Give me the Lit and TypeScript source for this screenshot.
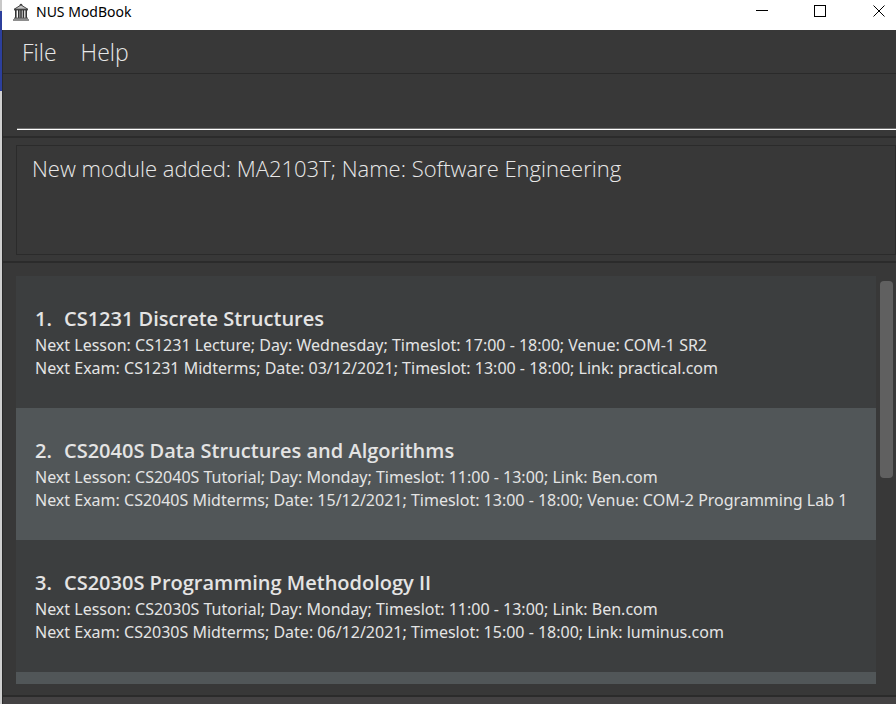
import { LitElement, html, css, svg } from "lit";
import { customElement, property } from "lit/decorators.js";

interface Module {
  title: string;
  lesson: string;
  exam: string;
}

const MODULES: Module[] = [
  {
    title: "CS1231 Discrete Structures",
    lesson: "CS1231 Lecture; Day: Wednesday; Timeslot: 17:00 - 18:00; Venue: COM-1 SR2",
    exam: "CS1231 Midterms; Date: 03/12/2021; Timeslot: 13:00 - 18:00; Link: practical.com",
  },
  {
    title: "CS2040S Data Structures and Algorithms",
    lesson: "CS2040S Tutorial; Day: Monday; Timeslot: 11:00 - 13:00; Link: Ben.com",
    exam: "CS2040S Midterms; Date: 15/12/2021; Timeslot: 13:00 - 18:00; Venue: COM-2 Programming Lab 1",
  },
  {
    title: "CS2030S Programming Methodology II",
    lesson: "CS2030S Tutorial; Day: Monday; Timeslot: 11:00 - 13:00; Link: Ben.com",
    exam: "CS2030S Midterms; Date: 06/12/2021; Timeslot: 15:00 - 18:00; Link: luminus.com",
  },
];

@customElement("title-bar")
export class TitleBar extends LitElement {
  static styles = css`
    :host {
      display: flex;
      align-items: center;
      flex: none;
      height: 30px;
      background: #ffffff;
      color: #000000;
      font: 14px/20px "Noto Sans", sans-serif;
    }
    .logo {
      flex: none;
      width: 16px;
      height: 18px;
      margin: 0 7px 6px 11px;
    }
    .title {
      flex: 1;
      margin: 0 0 6px;
      font: inherit;
    }
    .controls {
      display: flex;
      height: 100%;
      overflow: hidden;
    }
    .control {
      display: flex;
      justify-content: center;
      width: 58px;
      height: 100%;
      padding: 5px 0 0;
      border: 0;
      background: none;
    }
    .control:last-child {
      width: 60px;
      margin-right: -13px;
    }
  `;

  private control(label: string, shape: unknown) {
    return html`<button class="control" aria-label=${label}>
      <svg width="12" height="12" viewBox="0 0 12 12" fill="none" stroke="#000" aria-hidden="true">${shape}</svg>
    </button>`;
  }

  render() {
    return html`
      <svg class="logo" viewBox="0 0 16 18" aria-hidden="true">
        <path d="M1.2 6.2 L8 2 L14.8 6.2 Z" fill="#c4c4c4" stroke="#444" stroke-width="1" />
        <path d="M6.5 2.2 L8 1 L9.5 2.2" fill="none" stroke="#333" />
        <path d="M1 6h14v1.4H1z" fill="#444" />
        <path d="M2 7h1.6v8H2zM5 7h1.6v8H5zM7.2 7h1.6v8H7.2zM9.6 7h1.6v8H9.6zM12.4 7h1.6v8h-1.6z" fill="#333" />
        <path d="M1 14.6h14v1.2H1z" fill="#555" />
        <path d="M0 16.4h16v1.2H0z" fill="#444" />
      </svg>
      <h1 class="title">NUS ModBook</h1>
      <div class="controls">
        ${this.control("Minimize", svg`<path d="M0 5.5h12" />`)}
        ${this.control("Maximize", svg`<rect x="0.5" y="0.5" width="11" height="11" />`)}
        ${this.control("Close", svg`<path d="M0.5 0.5l11 11M11.5 0.5l-11 11" />`)}
      </div>
    `;
  }
}

@customElement("module-card")
export class ModuleCard extends LitElement {
  @property({ type: Number }) position = 1;
  @property({ attribute: false }) module!: Module;

  static styles = css`
    :host {
      display: block;
      color: #e4e4e4;
      font: 16px/23px "Noto Sans", sans-serif;
      white-space: nowrap;
    }
    .heading {
      display: flex;
      margin: 0 0 2px;
      font: 600 20px/27px "Open Sans", sans-serif;
    }
    .index {
      width: 29px;
    }
    .detail {
      margin: 0;
    }
  `;

  render() {
    return html`
      <h2 class="heading"><span class="index">${this.position}.</span><span>${this.module.title}</span></h2>
      <p class="detail">Next Lesson: ${this.module.lesson}</p>
      <p class="detail">Next Exam: ${this.module.exam}</p>
    `;
  }
}

@customElement("app-root")
export class AppRoot extends LitElement {
  static styles = css`
    :host {
      display: flex;
      height: 100vh;
      overflow: hidden;
      background: #383838;
      font-family: "Open Sans", sans-serif;
    }
    .desktop {
      flex: none;
      width: 2px;
      background: linear-gradient(#c8c8c8 11px, #2c3f9c 11px 91px, #d0d0d0 91px);
    }
    .window {
      display: flex;
      flex-direction: column;
      flex: 1;
      min-width: 0;
    }
    .body {
      display: flex;
      flex-direction: column;
      flex: 1;
      min-height: 0;
      border-left: 1px solid #2a2a2a;
    }
    .menu {
      display: flex;
      flex: none;
      gap: 24px;
      height: 43px;
      padding-left: 19px;
      border-bottom: 1px solid #2a2a2a;
    }
    .menu-item {
      padding: 0;
      border: 0;
      background: none;
      color: #e8e8e8;
      font: 300 23px/42px "Open Sans", sans-serif;
    }
    .command {
      flex: none;
      padding: 14px 0 6px 14px;
      border-bottom: 2px solid #2b2b2b;
    }
    .command-input {
      display: block;
      box-sizing: border-box;
      width: 100%;
      height: 42px;
      padding: 0;
      border: 0;
      border-bottom: 1px solid #ffffff;
      box-shadow: inset 0 -1px #707070;
      outline: 0;
      background: none;
      color: #ffffff;
      font: 300 22px "Open Sans", sans-serif;
    }
    .result {
      flex: none;
      padding: 7px 0 6px 13px;
      border-bottom: 2px solid #2b2b2b;
    }
    .result-text {
      display: block;
      box-sizing: border-box;
      height: 110px;
      padding: 8px 15px;
      border: 1px solid #2b2b2b;
      color: #e8e8e8;
      font: 300 22px/28px "Open Sans", sans-serif;
    }
    .content {
      display: flex;
      flex: 1;
      min-height: 0;
      padding: 13px 0 11px 13px;
    }
    .list {
      flex: 1;
      min-width: 0;
      margin: 0;
      padding: 0;
      overflow: hidden;
      list-style: none;
    }
    .row {
      box-sizing: border-box;
      height: 132px;
      padding: 29px 19px;
      background: #3c3e3f;
    }
    .row:nth-child(even) {
      background: #515658;
    }
    .track {
      flex: none;
      width: 13px;
      padding: 5px 3px 0 4px;
    }
    .thumb {
      height: 49%;
      border-radius: 4px;
      background: #606060;
    }
    .status {
      flex: none;
      height: 7px;
      border-top: 2px solid #2b2b2b;
      background: #444243;
    }
  `;

  render() {
    return html`
      <div class="desktop"></div>
      <div class="window">
        <title-bar></title-bar>
        <div class="body">
          <nav class="menu">
            <button class="menu-item">File</button>
            <button class="menu-item">Help</button>
          </nav>
          <div class="command">
            <input class="command-input" type="text" aria-label="Command" />
          </div>
          <div class="result">
            <output class="result-text">New module added: MA2103T; Name: Software Engineering</output>
          </div>
          <div class="content">
            <ul class="list">
              ${MODULES.map(
                (m, i) => html`<li class="row"><module-card .position=${i + 1} .module=${m}></module-card></li>`
              )}
              <li class="row"></li>
            </ul>
            <div class="track"><div class="thumb"></div></div>
          </div>
          <footer class="status"></footer>
        </div>
      </div>
    `;
  }
}
